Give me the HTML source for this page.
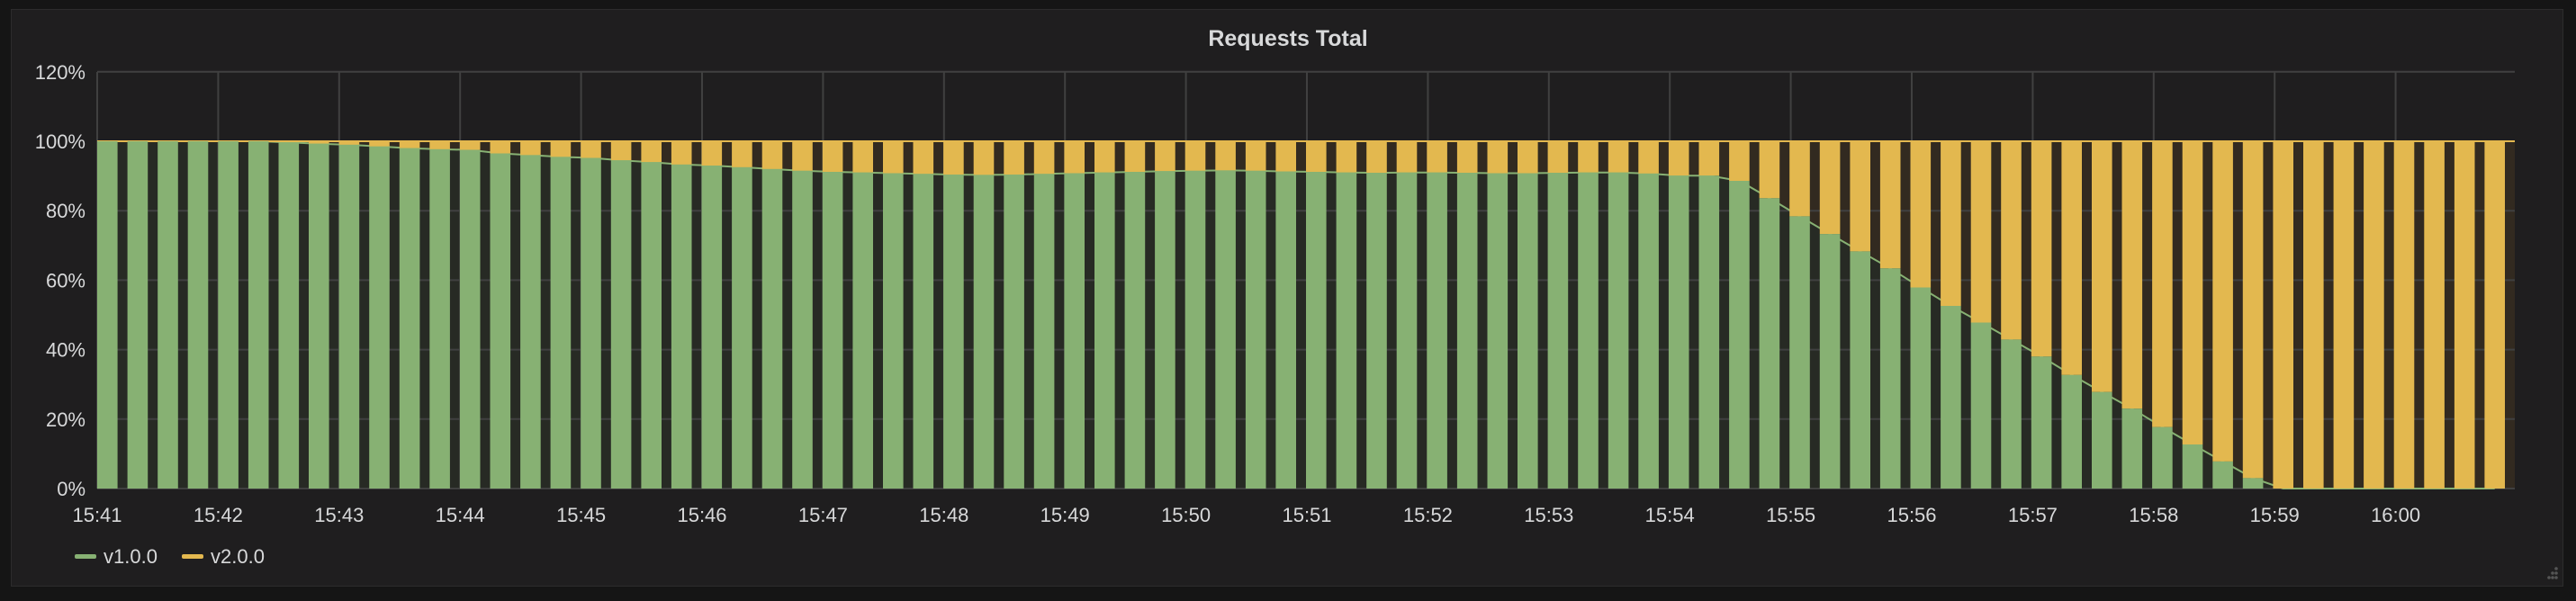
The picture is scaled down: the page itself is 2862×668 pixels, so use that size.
<!DOCTYPE html>
<html><head><meta charset="utf-8">
<style>
html,body{margin:0;padding:0;background:#151515;width:2862px;height:668px;overflow:hidden;font-family:"Liberation Sans",sans-serif;}
#p{position:absolute;left:12px;top:10px;width:2834px;height:640px;background:#1f1e1f;border:1px solid #2c2c2c;}
</style></head><body>
<div id="p"></div>
<svg id="s" width="2862" height="668" style="position:absolute;left:0;top:0"></svg>
<script>
var v=[100,100,100,100,100,100,99.7,99.3,99,98.5,98,97.7,97.5,96.5,96,95.5,95.2,94.5,94,93.3,93,92.5,92,91.5,91.2,91,90.8,90.6,90.4,90.3,90.4,90.6,90.8,91,91.2,91.4,91.5,91.6,91.5,91.3,91.2,91,90.9,91,91,90.9,90.8,90.8,90.9,91,91,90.7,90.1,90.1,88.6,83.6,78.4,73.3,68.3,63.4,57.9,52.6,47.8,42.9,38,32.7,27.8,23,17.7,12.7,7.8,3,0,0,0,0,0,0,0,0];
var L=108,R=2794,T0=157,B=543,step=(R-L)/80,bw=22.6;
function Y(p){return B-(B-T0)*p/100;}
var h='';
// fills
var pts=[];for(var i=0;i<80;i++){pts.push((L+step*i+bw/2).toFixed(1)+','+Y(v[i]).toFixed(1));}
h+='<rect x="'+L+'" y="'+T0+'" width="'+(R-L)+'" height="'+(B-T0)+'" fill="#322a20"/>';
h+='<polygon points="'+L+','+B+' '+L+','+Y(100)+' '+pts.join(' ')+' '+R+','+Y(0)+' '+R+','+B+'" fill="#272a24"/>';
// grid
for(var k=0;k<=6;k++){var y=B-(B-T0)/5*k;h+='<line x1="'+L+'" x2="'+R+'" y1="'+y+'" y2="'+y+'" stroke="#404040" stroke-width="2"/>';}
var m=134.4;
for(var k=0;k<20;k++){var x=L+m*k;h+='<line x1="'+x+'" x2="'+x+'" y1="80" y2="'+B+'" stroke="#404040" stroke-width="2"/>';}
h+='<polyline points="'+pts.join(' ')+'" fill="none" stroke="#87b173" stroke-width="2"/>';
h+='<line x1="'+L+'" x2="'+R+'" y1="'+T0+'" y2="'+T0+'" stroke="#e3b84f" stroke-width="2"/>';
// bars
for(var i=0;i<80;i++){var x=L+step*i,yg=Y(v[i]);
 h+='<rect x="'+x.toFixed(1)+'" y="'+T0+'" width="'+bw+'" height="'+(yg-T0).toFixed(1)+'" fill="#e3b84f"/>';
 h+='<rect x="'+x.toFixed(1)+'" y="'+yg.toFixed(1)+'" width="'+bw+'" height="'+(B-yg).toFixed(1)+'" fill="#87b173"/>';}
// axis labels
var yl=['0%','20%','40%','60%','80%','100%','120%'];
for(var k=0;k<=6;k++){var y=B-(B-T0)/5*k;h+='<text x="95" y="'+(y+8)+'" text-anchor="end" font-size="22" fill="#d8d9da" font-family="Liberation Sans, sans-serif">'+yl[k]+'</text>';}
for(var k=0;k<20;k++){var x=L+m*k;var mm=41+k;var lab=mm>=60?'16:0'+(mm-60):'15:'+mm;h+='<text x="'+x+'" y="580" text-anchor="middle" font-size="22" fill="#d8d9da" font-family="Liberation Sans, sans-serif">'+lab+'</text>';}
h+='<text x="1431" y="51" text-anchor="middle" font-size="25" font-weight="bold" fill="#d8d9da" font-family="Liberation Sans, sans-serif">Requests Total</text>';
h+='<rect x="83" y="616" width="24" height="5" rx="2" fill="#87b173"/><text x="115" y="626" font-size="22" fill="#d8d9da" font-family="Liberation Sans, sans-serif">v1.0.0</text>';
h+='<rect x="202" y="616" width="24" height="5" rx="2" fill="#e3b84f"/><text x="234" y="626" font-size="22" fill="#d8d9da" font-family="Liberation Sans, sans-serif">v2.0.0</text>';
var d=[[2840,632],[2836,637],[2840,637],[2832,642],[2836,642],[2840,642]];
for(var j=0;j<d.length;j++)h+='<circle cx="'+d[j][0]+'" cy="'+d[j][1]+'" r="1.8" fill="#555"/>';
document.getElementById('s').innerHTML=h;
</script>
</body></html>
